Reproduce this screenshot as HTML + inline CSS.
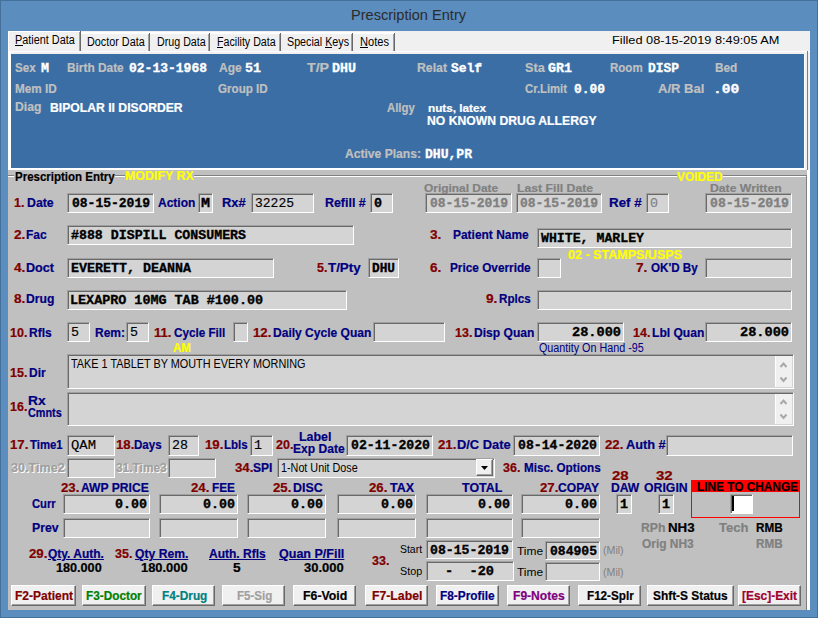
<!DOCTYPE html>
<html><head><meta charset="utf-8"><title>Prescription Entry</title><style>
html,body{margin:0;padding:0}
body{width:818px;height:618px;overflow:hidden;position:relative;background:#5b8dbf}
.frame{position:absolute;left:0;top:0;width:818px;height:618px;box-sizing:border-box;border:1px solid #44709c;background:#5b8dbf}
.r,.bx,.bt,.t{position:absolute}
.bx{box-sizing:border-box;border-style:solid;border-width:1px;border-color:#a0a0a0 #ffffff #ffffff #a0a0a0;box-shadow:inset 1px 1px 0 #696969}
.bt{box-sizing:border-box;background:#f0f0f0;border-style:solid;border-width:1px;border-color:#ffffff #696969 #696969 #ffffff;box-shadow:inset -1px -1px 0 #a0a0a0}
.t{white-space:pre;transform-origin:0 0}
.B12{font-family:"Liberation Sans",sans-serif;font-weight:bold;font-size:12px;line-height:12px}
.B11{font-family:"Liberation Sans",sans-serif;font-weight:bold;font-size:11px;line-height:11px}
.N12{font-family:"Liberation Sans",sans-serif;font-weight:normal;font-size:12px;line-height:12px}
.N11{font-family:"Liberation Sans",sans-serif;font-weight:normal;font-size:11px;line-height:11px}
.MB{font-family:"Liberation Mono",monospace;font-weight:bold;font-size:13.333px;line-height:13.333px}
.MN{font-family:"Liberation Mono",monospace;font-weight:normal;font-size:13.333px;line-height:13.333px}
.T14{font-family:"Liberation Sans",sans-serif;font-weight:normal;font-size:14px;line-height:14px}
.MB{-webkit-text-stroke:0.35px currentColor}
.B12,.B11{-webkit-text-stroke:0.2px currentColor}
.MN{-webkit-text-stroke:0.15px currentColor}
</style></head>
<body><div class="frame"></div>

<div class="r" style="left:8px;top:31px;width:802px;height:579px;background:#f0f0f0;"></div>
<div class="r" style="left:8px;top:31px;width:73px;height:21px;background:#f0f0f0;border-top:1px solid #fff;border-left:1px solid #fff;box-sizing:border-box"></div>
<div class="r" style="left:80px;top:31px;width:1px;height:20px;background:#696969;"></div>
<div class="r" style="left:79px;top:32px;width:1px;height:19px;background:#a0a0a0;"></div>
<div class="r" style="left:81px;top:32px;width:69px;height:2px;background:#ffffff;"></div>
<div class="r" style="left:149px;top:33px;width:1px;height:18px;background:#696969;"></div>
<div class="r" style="left:148px;top:34px;width:1px;height:17px;background:#a0a0a0;"></div>
<div class="r" style="left:150px;top:32px;width:60px;height:2px;background:#ffffff;"></div>
<div class="r" style="left:209px;top:33px;width:1px;height:18px;background:#696969;"></div>
<div class="r" style="left:208px;top:34px;width:1px;height:17px;background:#a0a0a0;"></div>
<div class="r" style="left:210px;top:32px;width:71px;height:2px;background:#ffffff;"></div>
<div class="r" style="left:280px;top:33px;width:1px;height:18px;background:#696969;"></div>
<div class="r" style="left:279px;top:34px;width:1px;height:17px;background:#a0a0a0;"></div>
<div class="r" style="left:281px;top:32px;width:72px;height:2px;background:#ffffff;"></div>
<div class="r" style="left:352px;top:33px;width:1px;height:18px;background:#696969;"></div>
<div class="r" style="left:351px;top:34px;width:1px;height:17px;background:#a0a0a0;"></div>
<div class="r" style="left:353px;top:32px;width:42px;height:2px;background:#ffffff;"></div>
<div class="r" style="left:394px;top:33px;width:1px;height:18px;background:#696969;"></div>
<div class="r" style="left:393px;top:34px;width:1px;height:17px;background:#a0a0a0;"></div>
<div class="r" style="left:15px;top:45px;width:8px;height:1px;background:#000"></div>
<div class="r" style="left:217px;top:47px;width:6px;height:1px;background:#000"></div>
<div class="r" style="left:325px;top:47px;width:7px;height:1px;background:#000"></div>
<div class="r" style="left:360px;top:47px;width:8px;height:1px;background:#000"></div>
<div class="r" style="left:8px;top:51px;width:802px;height:1px;background:#ffffff;"></div>
<div class="r" style="left:8px;top:51px;width:3px;height:119px;background:#ffffff;"></div>
<div class="r" style="left:807px;top:51px;width:1px;height:119px;background:#808080;"></div>
<div class="r" style="left:11px;top:54px;width:793px;height:114px;background:#3a6ea5;"></div>
<div class="r" style="left:8px;top:168px;width:797px;height:2px;background:#ffffff;"></div>
<div class="r" style="left:804px;top:54px;width:1px;height:115px;background:#ffffff;"></div>
<div class="r" style="left:8px;top:170px;width:799px;height:440px;background:#c0c0c0;"></div>
<div class="r" style="left:807px;top:170px;width:3px;height:440px;background:#ffffff;"></div>
<div class="r" style="left:8px;top:175px;width:6px;height:1px;background:#808080;"></div>
<div class="r" style="left:8px;top:176px;width:6px;height:1px;background:#ffffff;"></div>
<div class="r" style="left:115px;top:175px;width:10px;height:1px;background:#808080;"></div>
<div class="r" style="left:115px;top:176px;width:10px;height:1px;background:#ffffff;"></div>
<div class="r" style="left:194px;top:175px;width:483px;height:1px;background:#808080;"></div>
<div class="r" style="left:194px;top:176px;width:483px;height:1px;background:#ffffff;"></div>
<div class="r" style="left:723px;top:175px;width:84px;height:1px;background:#808080;"></div>
<div class="r" style="left:723px;top:176px;width:84px;height:1px;background:#ffffff;"></div>
<div class="r" style="left:806px;top:175px;width:1px;height:435px;background:#808080;"></div>
<div class="bx" style="left:67px;top:193px;width:87px;height:20px;background:#d4d4d4"></div>
<div class="bx" style="left:198px;top:193px;width:15px;height:20px;background:#d4d4d4"></div>
<div class="bx" style="left:251px;top:193px;width:63px;height:20px;background:#d4d4d4"></div>
<div class="bx" style="left:370px;top:193px;width:23px;height:20px;background:#d4d4d4"></div>
<div class="bx" style="left:425px;top:193px;width:87px;height:20px;background:#d4d4d4"></div>
<div class="bx" style="left:516px;top:193px;width:86px;height:20px;background:#d4d4d4"></div>
<div class="bx" style="left:646px;top:193px;width:23px;height:20px;background:#d4d4d4"></div>
<div class="bx" style="left:705px;top:193px;width:87px;height:20px;background:#d4d4d4"></div>
<div class="bx" style="left:67px;top:225px;width:287px;height:20px;background:#d4d4d4"></div>
<div class="bx" style="left:537px;top:228px;width:255px;height:20px;background:#d4d4d4"></div>
<div class="bx" style="left:67px;top:258px;width:207px;height:20px;background:#d4d4d4"></div>
<div class="bx" style="left:368px;top:258px;width:31px;height:20px;background:#d4d4d4"></div>
<div class="bx" style="left:537px;top:258px;width:24px;height:20px;background:#d4d4d4"></div>
<div class="bx" style="left:705px;top:258px;width:87px;height:20px;background:#d4d4d4"></div>
<div class="bx" style="left:67px;top:290px;width:280px;height:20px;background:#d4d4d4"></div>
<div class="bx" style="left:537px;top:290px;width:255px;height:20px;background:#d4d4d4"></div>
<div class="bx" style="left:67px;top:322px;width:23px;height:20px;background:#d4d4d4"></div>
<div class="bx" style="left:126px;top:322px;width:23px;height:20px;background:#d4d4d4"></div>
<div class="bx" style="left:233px;top:322px;width:15px;height:20px;background:#d4d4d4"></div>
<div class="bx" style="left:373px;top:322px;width:72px;height:20px;background:#d4d4d4"></div>
<div class="bx" style="left:537px;top:322px;width:87px;height:20px;background:#d4d4d4"></div>
<div class="bx" style="left:705px;top:322px;width:87px;height:20px;background:#d4d4d4"></div>
<div class="bx" style="left:67px;top:354px;width:727px;height:35px;background:#d4d4d4"></div>
<div class="r" style="left:775px;top:356px;width:17px;height:31px;background:#f0f0f0;border-left:1px solid #fff;box-sizing:border-box"></div>
<svg class="r" style="left:779px;top:360px" width="9" height="24" viewBox="0 0 9 24"><path d="M1.5 7L4.5 3.5L7.5 7M1.5 17.5L4.5 21L7.5 17.5" stroke="#a8a8a8" stroke-width="2" fill="none"/></svg>
<div class="bx" style="left:67px;top:392px;width:727px;height:34px;background:#d4d4d4"></div>
<div class="r" style="left:775px;top:394px;width:17px;height:30px;background:#f0f0f0;border-left:1px solid #fff;box-sizing:border-box"></div>
<svg class="r" style="left:779px;top:397px" width="9" height="24" viewBox="0 0 9 24"><path d="M1.5 7L4.5 3.5L7.5 7M1.5 17.5L4.5 21L7.5 17.5" stroke="#a8a8a8" stroke-width="2" fill="none"/></svg>
<div class="bx" style="left:67px;top:435px;width:48px;height:21px;background:#d4d4d4"></div>
<div class="bx" style="left:168px;top:435px;width:31px;height:21px;background:#d4d4d4"></div>
<div class="bx" style="left:250px;top:435px;width:23px;height:21px;background:#d4d4d4"></div>
<div class="bx" style="left:346px;top:435px;width:87px;height:21px;background:#d4d4d4"></div>
<div class="bx" style="left:513px;top:435px;width:87px;height:21px;background:#d4d4d4"></div>
<div class="bx" style="left:666px;top:435px;width:127px;height:21px;background:#d4d4d4"></div>
<div class="bx" style="left:67px;top:458px;width:48px;height:20px;background:#d4d4d4"></div>
<div class="bx" style="left:168px;top:458px;width:48px;height:20px;background:#d4d4d4"></div>
<div class="bx" style="left:277px;top:458px;width:218px;height:20px;background:#d4d4d4"></div>
<div class="bt" style="left:476px;top:459px;width:17px;height:17px"></div>
<svg class="r" style="left:481px;top:466px" width="7" height="4" viewBox="0 0 7 4"><path d="M0 0H7L3.5 4Z" fill="#000"/></svg>
<div class="r" style="left:691px;top:480px;width:109px;height:12px;background:#ff0000;"></div>
<div class="r" style="left:691px;top:480px;width:109px;height:38px;border:1px solid #ff0000;box-sizing:border-box"></div>
<div class="bx" style="left:63px;top:494px;width:87px;height:20px;background:#d4d4d4"></div>
<div class="bx" style="left:63px;top:518px;width:87px;height:20px;background:#d4d4d4"></div>
<div class="bx" style="left:159px;top:494px;width:79px;height:20px;background:#d4d4d4"></div>
<div class="bx" style="left:159px;top:518px;width:79px;height:20px;background:#d4d4d4"></div>
<div class="bx" style="left:247px;top:494px;width:79px;height:20px;background:#d4d4d4"></div>
<div class="bx" style="left:247px;top:518px;width:79px;height:20px;background:#d4d4d4"></div>
<div class="bx" style="left:337px;top:494px;width:79px;height:20px;background:#d4d4d4"></div>
<div class="bx" style="left:337px;top:518px;width:79px;height:20px;background:#d4d4d4"></div>
<div class="bx" style="left:426px;top:494px;width:87px;height:20px;background:#d4d4d4"></div>
<div class="bx" style="left:426px;top:518px;width:87px;height:20px;background:#d4d4d4"></div>
<div class="bx" style="left:521px;top:494px;width:79px;height:20px;background:#d4d4d4"></div>
<div class="bx" style="left:521px;top:518px;width:79px;height:20px;background:#d4d4d4"></div>
<div class="bx" style="left:616px;top:494px;width:16px;height:20px;background:#d4d4d4"></div>
<div class="bx" style="left:658px;top:494px;width:16px;height:20px;background:#d4d4d4"></div>
<div class="bx" style="left:730px;top:494px;width:23px;height:20px;background:#ffffff"></div>
<div class="r" style="left:732px;top:496px;width:2px;height:15px;background:#000000;"></div>
<div class="bx" style="left:426px;top:540px;width:87px;height:19px;background:#d4d4d4"></div>
<div class="bx" style="left:545px;top:541px;width:55px;height:19px;background:#d4d4d4"></div>
<div class="bx" style="left:426px;top:561px;width:88px;height:20px;background:#d4d4d4"></div>
<div class="bx" style="left:545px;top:562px;width:55px;height:19px;background:#d4d4d4"></div>
<div class="bt" style="left:11px;top:585px;width:65px;height:21px"></div>
<div class="bt" style="left:82px;top:585px;width:64px;height:21px"></div>
<div class="bt" style="left:152px;top:585px;width:63px;height:21px"></div>
<div class="bt" style="left:222px;top:585px;width:63px;height:21px"></div>
<div class="bt" style="left:293px;top:585px;width:63px;height:21px"></div>
<div class="bt" style="left:365px;top:585px;width:63px;height:21px"></div>
<div class="bt" style="left:436px;top:585px;width:63px;height:21px"></div>
<div class="bt" style="left:507px;top:585px;width:63px;height:21px"></div>
<div class="bt" style="left:578px;top:585px;width:63px;height:21px"></div>
<div class="bt" style="left:647px;top:585px;width:87px;height:21px"></div>
<div class="bt" style="left:738px;top:585px;width:63px;height:21px"></div>
<div class="t T14" style="left:350.96px;top:8px;color:#2b2b2b;transform:scaleX(1.0413);">Prescription Entry</div>
<div class="t N12" style="left:15.00px;top:34px;color:#000000;transform:scaleX(0.9041);">Patient Data</div>
<div class="t N12" style="left:87.00px;top:36px;color:#000000;transform:scaleX(0.9013);">Doctor Data</div>
<div class="t N12" style="left:157.00px;top:36px;color:#000000;transform:scaleX(0.8906);">Drug Data</div>
<div class="t N12" style="left:217.00px;top:36px;color:#000000;transform:scaleX(0.8893);">Facility Data</div>
<div class="t N12" style="left:287.00px;top:36px;color:#000000;transform:scaleX(0.8938);">Special Keys</div>
<div class="t N12" style="left:360.00px;top:36px;color:#000000;transform:scaleX(0.9251);">Notes</div>
<div class="t N11" style="left:612.00px;top:35px;color:#000000;transform:scaleX(1.1605);">Filled 08-15-2019 8:49:05 AM</div>
<div class="t B12" style="left:15.00px;top:62px;color:#c0c0c0;transform:scaleX(0.9687);">Sex</div>
<div class="t MB" style="left:41.00px;top:62px;color:#ffffff;transform:scaleX(1.0000);">M</div>
<div class="t B12" style="left:67.00px;top:62px;color:#c0c0c0;transform:scaleX(0.9885);">Birth Date</div>
<div class="t MB" style="left:129.00px;top:62px;color:#ffffff;transform:scaleX(0.9752);">02-13-1968</div>
<div class="t B12" style="left:219.00px;top:62px;color:#c0c0c0;transform:scaleX(1.0002);">Age</div>
<div class="t MB" style="left:245.00px;top:62px;color:#ffffff;transform:scaleX(1.0001);">51</div>
<div class="t B12" style="left:307.00px;top:62px;color:#c0c0c0;transform:scaleX(1.1787);">T/P</div>
<div class="t MB" style="left:332.00px;top:62px;color:#ffffff;transform:scaleX(1.0002);">DHU</div>
<div class="t B12" style="left:417.00px;top:62px;color:#c0c0c0;transform:scaleX(1.0222);">Relat</div>
<div class="t MB" style="left:451.00px;top:62px;color:#ffffff;transform:scaleX(0.9689);">Self</div>
<div class="t B12" style="left:525.00px;top:62px;color:#c0c0c0;transform:scaleX(1.0526);">Sta</div>
<div class="t MB" style="left:548.00px;top:62px;color:#ffffff;transform:scaleX(1.0002);">GR1</div>
<div class="t B12" style="left:610.00px;top:62px;color:#c0c0c0;transform:scaleX(0.9602);">Room</div>
<div class="t MB" style="left:648.00px;top:62px;color:#ffffff;transform:scaleX(0.9689);">DISP</div>
<div class="t B12" style="left:715.00px;top:62px;color:#c0c0c0;transform:scaleX(0.9848);">Bed</div>
<div class="t B12" style="left:15.00px;top:83px;color:#c0c0c0;transform:scaleX(0.9766);">Mem ID</div>
<div class="t B12" style="left:218.00px;top:83px;color:#c0c0c0;transform:scaleX(0.9678);">Group ID</div>
<div class="t B12" style="left:525.00px;top:83px;color:#c0c0c0;transform:scaleX(0.9401);">Cr.Limit</div>
<div class="t MB" style="left:574.00px;top:83px;color:#ffffff;transform:scaleX(0.9689);">0.00</div>
<div class="t B12" style="left:658.00px;top:83px;color:#c0c0c0;transform:scaleX(1.0864);">A/R Bal</div>
<div class="t MB" style="left:712.71px;top:83px;color:#ffffff;transform:scaleX(1.0954);">.00</div>
<div class="t B12" style="left:15.00px;top:101px;color:#c0c0c0;transform:scaleX(1.0127);">Diag</div>
<div class="t B12" style="left:50.00px;top:102px;color:#ffffff;transform:scaleX(1.0152);">BIPOLAR II DISORDER</div>
<div class="t B12" style="left:387.00px;top:102px;color:#c0c0c0;transform:scaleX(0.9439);">Allgy</div>
<div class="t B11" style="left:428.00px;top:103px;color:#ffffff;transform:scaleX(1.0672);">nuts, latex</div>
<div class="t B12" style="left:427.00px;top:115px;color:#ffffff;transform:scaleX(1.0160);">NO KNOWN DRUG ALLERGY</div>
<div class="t B12" style="left:345.00px;top:148px;color:#c0c0c0;transform:scaleX(1.0085);">Active Plans:</div>
<div class="t MB" style="left:425.00px;top:148px;color:#ffffff;transform:scaleX(0.9794);">DHU,PR</div>
<div class="t B12" style="left:15.00px;top:171px;color:#000000;transform:scaleX(0.9583);">Prescription Entry</div>
<div class="t B12" style="left:125.00px;top:170px;color:#ffff00;transform:scaleX(1.0350);">MODIFY RX</div>
<div class="t B12" style="left:677.00px;top:171px;color:#ffff00;transform:scaleX(0.9926);">VOIDED</div>
<div class="t B12" style="left:14.00px;top:197px;color:#800000;transform:scaleX(1.0337);">1.</div>
<div class="t B12" style="left:27.00px;top:197px;color:#000080;transform:scaleX(1.0252);">Date</div>
<div class="t MB" style="left:72.00px;top:197px;color:#000000;transform:scaleX(0.9752);">08-15-2019</div>
<div class="t B12" style="left:158.00px;top:197px;color:#000080;transform:scaleX(1.0000);">Action</div>
<div class="t MB" style="left:201.00px;top:197px;color:#000000;transform:scaleX(1.1250);">M</div>
<div class="t B12" style="left:222.00px;top:197px;color:#000080;transform:scaleX(1.0743);">Rx#</div>
<div class="t MN" style="left:255.00px;top:197px;color:#000000;transform:scaleX(0.9752);">32225</div>
<div class="t B12" style="left:325.00px;top:197px;color:#000080;transform:scaleX(1.0335);">Refill #</div>
<div class="t MB" style="left:374.00px;top:197px;color:#000000;transform:scaleX(1.0000);">0</div>
<div class="t B11" style="left:424.00px;top:183px;color:#808080;transform:scaleX(1.0828);">Original Date</div>
<div class="t MB" style="left:430.00px;top:197px;color:#808080;transform:scaleX(0.9752);">08-15-2019</div>
<div class="t B11" style="left:517.00px;top:183px;color:#808080;transform:scaleX(1.1120);">Last Fill Date</div>
<div class="t MB" style="left:520.00px;top:197px;color:#808080;transform:scaleX(0.9752);">08-15-2019</div>
<div class="t B12" style="left:609.00px;top:197px;color:#000080;transform:scaleX(1.1122);">Ref #</div>
<div class="t MN" style="left:650.00px;top:197px;color:#808080;transform:scaleX(1.0000);">0</div>
<div class="t B11" style="left:710.00px;top:183px;color:#808080;transform:scaleX(1.1100);">Date Written</div>
<div class="t MB" style="left:710.00px;top:197px;color:#808080;transform:scaleX(0.9877);">08-15-2019</div>
<div class="t B12" style="left:14.00px;top:229px;color:#800000;transform:scaleX(1.1371);">2.</div>
<div class="t B12" style="left:26.00px;top:229px;color:#000080;transform:scaleX(0.9998);">Fac</div>
<div class="t MB" style="left:71.00px;top:229px;color:#000000;transform:scaleX(0.9945);">#888 DISPILL CONSUMERS</div>
<div class="t B12" style="left:430.00px;top:229px;color:#800000;transform:scaleX(1.1371);">3.</div>
<div class="t B12" style="left:453.00px;top:229px;color:#000080;transform:scaleX(0.9954);">Patient Name</div>
<div class="t MB" style="left:541.00px;top:232px;color:#000000;transform:scaleX(0.9906);">WHITE, MARLEY</div>
<div class="t B12" style="left:568.00px;top:249px;color:#ffff00;transform:scaleX(1.0446);">02 - STAMPS/USPS</div>
<div class="t B12" style="left:14.00px;top:262px;color:#800000;transform:scaleX(1.1371);">4.</div>
<div class="t B12" style="left:26.00px;top:262px;color:#000080;transform:scaleX(1.0499);">Doct</div>
<div class="t MB" style="left:71.00px;top:262px;color:#000000;transform:scaleX(1.0002);">EVERETT, DEANNA</div>
<div class="t B12" style="left:317.00px;top:262px;color:#800000;transform:scaleX(1.0337);">5.</div>
<div class="t B12" style="left:328.00px;top:262px;color:#000080;transform:scaleX(1.1125);">T/Pty</div>
<div class="t MB" style="left:372.00px;top:262px;color:#000000;transform:scaleX(0.9585);">DHU</div>
<div class="t B12" style="left:430.00px;top:262px;color:#800000;transform:scaleX(1.1371);">6.</div>
<div class="t B12" style="left:450.00px;top:262px;color:#000080;transform:scaleX(0.9833);">Price Override</div>
<div class="t B12" style="left:636.00px;top:262px;color:#800000;transform:scaleX(1.1371);">7.</div>
<div class="t B12" style="left:651.00px;top:262px;color:#000080;transform:scaleX(0.9687);">OK&#x27;D By</div>
<div class="t B12" style="left:14.00px;top:293px;color:#800000;transform:scaleX(1.1371);">8.</div>
<div class="t B12" style="left:26.00px;top:293px;color:#000080;transform:scaleX(1.0121);">Drug</div>
<div class="t MB" style="left:69.99px;top:294px;color:#000000;transform:scaleX(1.0055);">LEXAPRO 10MG TAB #100.00</div>
<div class="t B12" style="left:486.00px;top:293px;color:#800000;transform:scaleX(1.1371);">9.</div>
<div class="t B12" style="left:499.00px;top:293px;color:#000080;transform:scaleX(0.9696);">Rplcs</div>
<div class="t B12" style="left:10.00px;top:327px;color:#800000;transform:scaleX(1.0399);">10.</div>
<div class="t B12" style="left:29.00px;top:327px;color:#000080;transform:scaleX(1.0002);">Rfls</div>
<div class="t MN" style="left:71.00px;top:326px;color:#000000;transform:scaleX(1.0000);">5</div>
<div class="t B12" style="left:95.00px;top:327px;color:#000080;transform:scaleX(0.9997);">Rem:</div>
<div class="t MN" style="left:130.00px;top:326px;color:#000000;transform:scaleX(1.0000);">5</div>
<div class="t B12" style="left:154.00px;top:327px;color:#800000;transform:scaleX(1.0838);">11.</div>
<div class="t B12" style="left:174.00px;top:327px;color:#000080;transform:scaleX(0.9741);">Cycle Fill</div>
<div class="t B12" style="left:253.00px;top:327px;color:#800000;transform:scaleX(1.1011);">12.</div>
<div class="t B12" style="left:273.00px;top:327px;color:#000080;transform:scaleX(1.0030);">Daily Cycle Quan</div>
<div class="t B12" style="left:455.00px;top:327px;color:#800000;transform:scaleX(1.0399);">13.</div>
<div class="t B12" style="left:474.00px;top:327px;color:#000080;transform:scaleX(1.0054);">Disp Quan</div>
<div class="t MB" style="left:572.00px;top:326px;color:#000000;transform:scaleX(1.0210);">28.000</div>
<div class="t B12" style="left:633.00px;top:327px;color:#800000;transform:scaleX(1.0399);">14.</div>
<div class="t B12" style="left:652.00px;top:327px;color:#000080;transform:scaleX(1.0065);">Lbl Quan</div>
<div class="t MB" style="left:740.00px;top:326px;color:#000000;transform:scaleX(1.0210);">28.000</div>
<div class="t B12" style="left:173.00px;top:342px;color:#ffff00;transform:scaleX(0.9643);">AM</div>
<div class="t N12" style="left:539.00px;top:342px;color:#000080;transform:scaleX(0.8970);">Quantity On Hand -95</div>
<div class="t B12" style="left:10.00px;top:367px;color:#800000;transform:scaleX(1.0399);">15.</div>
<div class="t B12" style="left:29.00px;top:367px;color:#000080;transform:scaleX(1.0000);">Dir</div>
<div class="t N12" style="left:71.00px;top:358px;color:#000000;transform:scaleX(0.9049);">TAKE 1 TABLET BY MOUTH EVERY MORNING</div>
<div class="t B12" style="left:10.00px;top:401px;color:#800000;transform:scaleX(1.0399);">16.</div>
<div class="t B12" style="left:28.00px;top:395px;color:#000080;transform:scaleX(1.1490);">Rx</div>
<div class="t B12" style="left:28.00px;top:407px;color:#000080;transform:scaleX(0.9028);">Cmnts</div>
<div class="t B12" style="left:10.00px;top:439px;color:#800000;transform:scaleX(1.1011);">17.</div>
<div class="t B12" style="left:30.00px;top:439px;color:#000080;transform:scaleX(0.9485);">Time1</div>
<div class="t MN" style="left:71.00px;top:439px;color:#000000;transform:scaleX(1.0418);">QAM</div>
<div class="t B12" style="left:116.00px;top:439px;color:#800000;transform:scaleX(1.1011);">18.</div>
<div class="t B12" style="left:134.00px;top:439px;color:#000080;transform:scaleX(0.9651);">Days</div>
<div class="t MN" style="left:172.00px;top:439px;color:#000000;transform:scaleX(1.0001);">28</div>
<div class="t B12" style="left:205.00px;top:439px;color:#800000;transform:scaleX(1.1011);">19.</div>
<div class="t B12" style="left:224.00px;top:439px;color:#000080;transform:scaleX(0.9602);">Lbls</div>
<div class="t MN" style="left:254.00px;top:439px;color:#000000;transform:scaleX(1.0000);">1</div>
<div class="t B12" style="left:276.00px;top:439px;color:#800000;transform:scaleX(1.0399);">20.</div>
<div class="t B12" style="left:299.00px;top:431px;color:#000080;transform:scaleX(1.0320);">Label</div>
<div class="t B12" style="left:293.00px;top:443px;color:#000080;transform:scaleX(1.0062);">Exp Date</div>
<div class="t MB" style="left:351.00px;top:439px;color:#000000;transform:scaleX(0.9877);">02-11-2020</div>
<div class="t B12" style="left:438.00px;top:439px;color:#800000;transform:scaleX(1.1011);">21.</div>
<div class="t B12" style="left:457.00px;top:439px;color:#000080;transform:scaleX(1.0728);">D/C Date</div>
<div class="t MB" style="left:518.00px;top:439px;color:#000000;transform:scaleX(0.9877);">08-14-2020</div>
<div class="t B12" style="left:605.00px;top:439px;color:#800000;transform:scaleX(1.1011);">22.</div>
<div class="t B12" style="left:626.00px;top:439px;color:#000080;transform:scaleX(1.0622);">Auth #</div>
<div class="t B12" style="left:12.00px;top:463px;color:#ffffff;transform:scaleX(1.0491);">30.Time2</div>
<div class="t B12" style="left:11.00px;top:462px;color:#a0a0a0;transform:scaleX(1.0491);">30.Time2</div>
<div class="t B12" style="left:117.00px;top:463px;color:#ffffff;transform:scaleX(0.9908);">31.Time3</div>
<div class="t B12" style="left:116.00px;top:462px;color:#a0a0a0;transform:scaleX(0.9908);">31.Time3</div>
<div class="t B12" style="left:235.00px;top:462px;color:#800000;transform:scaleX(1.1011);">34.</div>
<div class="t B12" style="left:253.00px;top:462px;color:#000080;transform:scaleX(0.9996);">SPI</div>
<div class="t N12" style="left:281.00px;top:462px;color:#000000;transform:scaleX(0.8986);">1-Not Unit Dose</div>
<div class="t B12" style="left:503.00px;top:462px;color:#800000;transform:scaleX(1.0399);">36.</div>
<div class="t B12" style="left:524.00px;top:462px;color:#000080;transform:scaleX(0.9747);">Misc. Options</div>
<div class="t B12" style="left:61.00px;top:482px;color:#800000;transform:scaleX(1.1011);">23.</div>
<div class="t B12" style="left:81.00px;top:482px;color:#000080;transform:scaleX(1.0098);">AWP PRICE</div>
<div class="t B12" style="left:191.00px;top:482px;color:#800000;transform:scaleX(1.1011);">24.</div>
<div class="t B12" style="left:212.00px;top:482px;color:#000080;transform:scaleX(0.9857);">FEE</div>
<div class="t B12" style="left:273.00px;top:482px;color:#800000;transform:scaleX(1.1011);">25.</div>
<div class="t B12" style="left:293.00px;top:482px;color:#000080;transform:scaleX(1.0343);">DISC</div>
<div class="t B12" style="left:369.00px;top:482px;color:#800000;transform:scaleX(1.1011);">26.</div>
<div class="t B12" style="left:390.00px;top:482px;color:#000080;transform:scaleX(1.0387);">TAX</div>
<div class="t B12" style="left:462.00px;top:482px;color:#000080;transform:scaleX(1.0375);">TOTAL</div>
<div class="t B12" style="left:540.00px;top:482px;color:#800000;transform:scaleX(1.1011);">27.</div>
<div class="t B12" style="left:558.00px;top:482px;color:#000080;transform:scaleX(1.0079);">COPAY</div>
<div class="t B12" style="left:612.00px;top:470px;color:#800000;transform:scaleX(1.2433);">28</div>
<div class="t B12" style="left:611.00px;top:482px;color:#000080;transform:scaleX(1.0115);">DAW</div>
<div class="t B12" style="left:656.00px;top:470px;color:#800000;transform:scaleX(1.2433);">32</div>
<div class="t B12" style="left:644.00px;top:482px;color:#000080;transform:scaleX(1.0238);">ORIGIN</div>
<div class="t B12" style="left:697.00px;top:481px;color:#000000;transform:scaleX(0.9859);">LINE TO CHANGE</div>
<div class="t B12" style="left:32.00px;top:498px;color:#000080;transform:scaleX(0.9351);">Curr</div>
<div class="t B12" style="left:32.00px;top:522px;color:#000080;transform:scaleX(1.0248);">Prev</div>
<div class="t MB" style="left:115.00px;top:498px;color:#000000;transform:scaleX(1.0002);">0.00</div>
<div class="t MB" style="left:203.00px;top:498px;color:#000000;transform:scaleX(1.0002);">0.00</div>
<div class="t MB" style="left:291.00px;top:498px;color:#000000;transform:scaleX(1.0002);">0.00</div>
<div class="t MB" style="left:381.00px;top:498px;color:#000000;transform:scaleX(1.0002);">0.00</div>
<div class="t MB" style="left:478.00px;top:498px;color:#000000;transform:scaleX(1.0002);">0.00</div>
<div class="t MB" style="left:565.00px;top:498px;color:#000000;transform:scaleX(1.0002);">0.00</div>
<div class="t MB" style="left:620.00px;top:498px;color:#000000;transform:scaleX(1.0000);">1</div>
<div class="t MB" style="left:662.00px;top:498px;color:#000000;transform:scaleX(1.0000);">1</div>
<div class="t B12" style="left:641.00px;top:522px;color:#808080;transform:scaleX(1.0139);">RPh</div>
<div class="t B12" style="left:668.00px;top:522px;color:#000000;transform:scaleX(1.1096);">NH3</div>
<div class="t B12" style="left:719.00px;top:522px;color:#808080;transform:scaleX(1.0826);">Tech</div>
<div class="t B12" style="left:756.00px;top:522px;color:#000000;transform:scaleX(0.9761);">RMB</div>
<div class="t B12" style="left:642.00px;top:538px;color:#808080;transform:scaleX(0.9936);">Orig NH3</div>
<div class="t B12" style="left:756.00px;top:538px;color:#808080;transform:scaleX(0.9761);">RMB</div>
<div class="t B12" style="left:29.00px;top:548px;color:#800000;transform:scaleX(1.1011);">29.</div>
<div class="t B12" style="left:48.00px;top:548px;color:#000080;transform:scaleX(0.9982);text-decoration:underline">Qty. Auth.</div>
<div class="t B12" style="left:115.00px;top:548px;color:#800000;transform:scaleX(1.0399);">35.</div>
<div class="t B12" style="left:135.00px;top:548px;color:#000080;transform:scaleX(1.0125);text-decoration:underline">Qty Rem.</div>
<div class="t B12" style="left:209.00px;top:548px;color:#000080;transform:scaleX(1.0002);text-decoration:underline">Auth. Rfls</div>
<div class="t B12" style="left:279.00px;top:548px;color:#000080;transform:scaleX(1.0427);text-decoration:underline">Quan P/Fill</div>
<div class="t B12" style="left:56.00px;top:562px;color:#000000;transform:scaleX(1.0526);">180.000</div>
<div class="t B12" style="left:141.00px;top:562px;color:#000000;transform:scaleX(1.0754);">180.000</div>
<div class="t B12" style="left:233.00px;top:562px;color:#000000;transform:scaleX(1.1429);">5</div>
<div class="t B12" style="left:304.00px;top:562px;color:#000000;transform:scaleX(1.0802);">30.000</div>
<div class="t B12" style="left:372.00px;top:555px;color:#800000;transform:scaleX(1.0399);">33.</div>
<div class="t N11" style="left:400.00px;top:544px;color:#000000;transform:scaleX(0.9493);">Start</div>
<div class="t MB" style="left:430.00px;top:544px;color:#000000;transform:scaleX(0.9877);">08-15-2019</div>
<div class="t N11" style="left:517.00px;top:546px;color:#000000;transform:scaleX(1.0870);">Time</div>
<div class="t MB" style="left:550.00px;top:545px;color:#000000;transform:scaleX(0.9794);">084905</div>
<div class="t N11" style="left:603.00px;top:545px;color:#808080;transform:scaleX(0.9655);">(Mil)</div>
<div class="t N11" style="left:400.00px;top:566px;color:#000000;transform:scaleX(0.9773);">Stop</div>
<div class="t MB" style="left:444.96px;top:565px;color:#000000;transform:scaleX(1.0219);">-  -20</div>
<div class="t N11" style="left:517.00px;top:567px;color:#000000;transform:scaleX(1.0870);">Time</div>
<div class="t N11" style="left:603.00px;top:567px;color:#808080;transform:scaleX(0.9655);">(Mil)</div>
<div class="t B12" style="left:15.00px;top:590px;color:#800000;transform:scaleX(0.9998);">F2-Patient</div>
<div class="t B12" style="left:86.00px;top:590px;color:#008000;transform:scaleX(0.9825);">F3-Doctor</div>
<div class="t B12" style="left:162.00px;top:590px;color:#008080;transform:scaleX(0.9854);">F4-Drug</div>
<div class="t B12" style="left:237.00px;top:590px;color:#a0a0a0;transform:scaleX(0.9632);">F5-Sig</div>
<div class="t B12" style="left:303.00px;top:590px;color:#000000;transform:scaleX(1.0286);">F6-Void</div>
<div class="t B12" style="left:372.00px;top:590px;color:#800000;transform:scaleX(1.0202);">F7-Label</div>
<div class="t B12" style="left:440.00px;top:590px;color:#000080;transform:scaleX(0.9880);">F8-Profile</div>
<div class="t B12" style="left:513.00px;top:590px;color:#800080;transform:scaleX(1.0065);">F9-Notes</div>
<div class="t B12" style="left:587.00px;top:590px;color:#000000;transform:scaleX(0.9722);">F12-Splr</div>
<div class="t B12" style="left:653.00px;top:590px;color:#000000;transform:scaleX(0.9913);">Shft-S Status</div>
<div class="t B12" style="left:742.00px;top:590px;color:#a00030;transform:scaleX(0.9936);">[Esc]-Exit</div>
</body></html>
